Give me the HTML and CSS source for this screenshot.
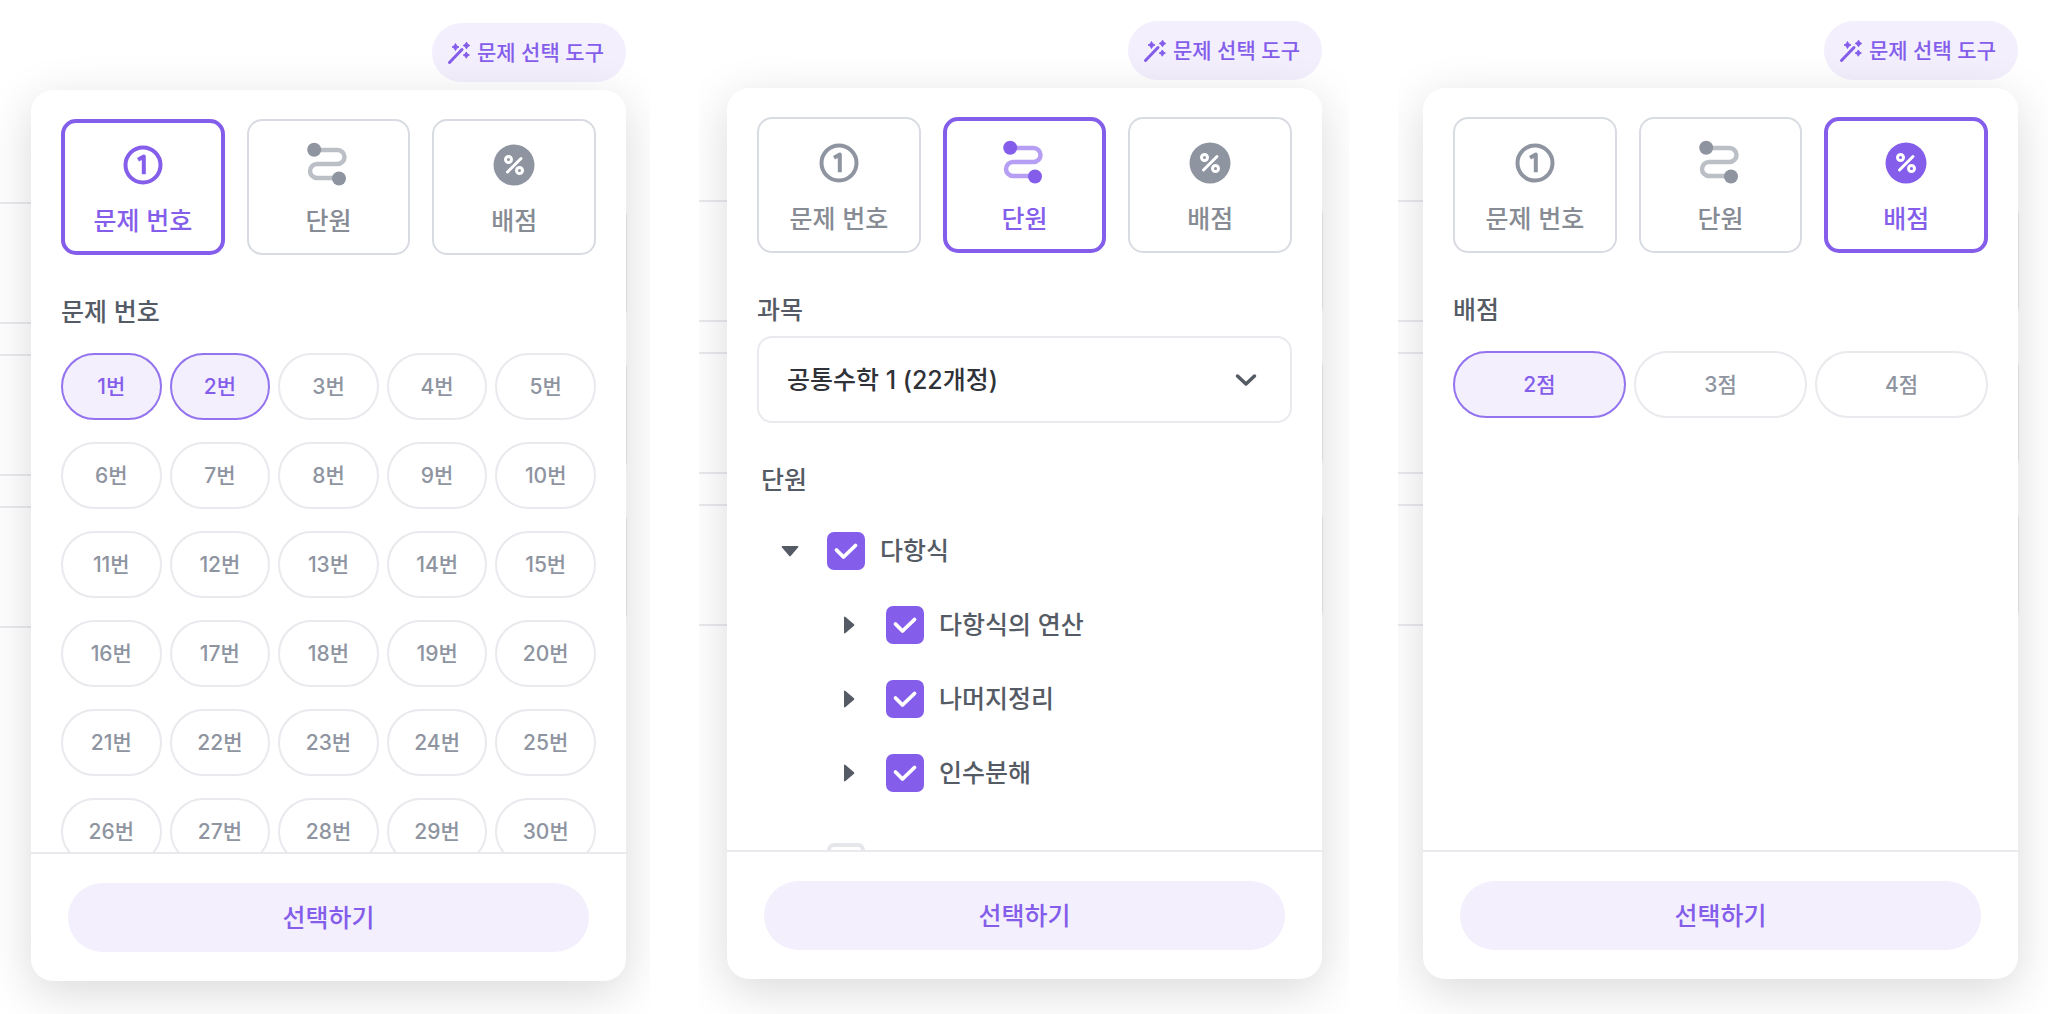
FILE: index.html
```
<!DOCTYPE html>
<html lang="ko">
<head>
  <meta charset="utf-8">
  <title>문제 선택 도구</title>
  <link rel="stylesheet" href="styles.css">
</head>
<body>
  <!-- icons shared by the three panels -->
  <svg class="icon-defs" aria-hidden="true">
    <symbol id="icon-wand" viewBox="0 0 24 24">
      <path d="M2.500 21.500 15 8.500" fill="none" stroke="currentColor" stroke-width="3" stroke-linecap="round"/>
      <g fill="currentColor" stroke="currentColor" stroke-width="1" stroke-linejoin="round">
        <path d="M8.500 2.500 9.700 4.800 12 6 9.700 7.200 8.500 9.500 7.300 7.200 5 6 7.300 4.800Z"/>
        <path d="M19.500 1.200 20.700 3.300 22.800 4.500 20.700 5.700 19.500 7.800 18.300 5.700 16.200 4.500 18.300 3.300Z"/>
        <path d="M19.300 11 20.400 13 22.400 14.100 20.400 15.200 19.300 17.200 18.200 15.200 16.200 14.100 18.200 13Z"/>
      </g>
    </symbol>
    <symbol id="icon-number" viewBox="0 0 48 48">
      <circle cx="24" cy="24" r="17.500" fill="none" stroke="currentColor" stroke-width="4"/>
      <path d="M19 18.800 24.800 15.500V33.300" fill="none" stroke="currentColor" stroke-width="4" stroke-linejoin="round"/>
    </symbol>
    <symbol id="icon-route" viewBox="0 0 48 48">
      <path d="M10 9H33.500a7 7 0 0 1 0 14H13a7 7 0 0 0 0 14H35" fill="none" stroke="currentColor" stroke-opacity=".6" stroke-width="4.500"/>
      <circle cx="10.200" cy="8.800" r="7" fill="currentColor"/>
      <circle cx="35" cy="37.500" r="7" fill="currentColor"/>
    </symbol>
    <symbol id="icon-percent" viewBox="0 0 48 48">
      <circle cx="24" cy="24" r="20.500" fill="currentColor"/>
      <g fill="none" stroke="#fff" stroke-width="3" stroke-linecap="round">
        <path d="M17.500 31 31 17.500"/>
        <circle cx="18.500" cy="18.500" r="3"/>
        <circle cx="29.500" cy="29.500" r="3"/>
      </g>
    </symbol>
    <symbol id="icon-check" viewBox="0 0 38 38">
      <path d="M9.500 18 16.500 25 28.500 13.500" fill="none" stroke="currentColor" stroke-width="3.800" stroke-linecap="round" stroke-linejoin="round"/>
    </symbol>
    <symbol id="icon-caret" viewBox="0 0 24 24">
      <path d="M7 4.500Q7 2.800 8.500 4L17 11.300Q17.700 12 17 12.700L8.500 20Q7 21.200 7 19.500Z" fill="currentColor"/>
    </symbol>
  </svg>

  <main class="board">

    <!-- by question number -->
    <section class="shot shot-first">
      <div class="tool">
        <div class="sheets"><div></div><div></div><div></div></div>
        <button class="tool-toggle" type="button"><svg class="wand"><use href="#icon-wand"/></svg>문제 선택 도구</button>
        <div class="panel">
          <div class="panel-body">
            <div class="tabs">
              <button class="tab active" type="button"><svg><use href="#icon-number"/></svg>문제 번호</button>
              <button class="tab" type="button"><svg><use href="#icon-route"/></svg>단원</button>
              <button class="tab" type="button"><svg><use href="#icon-percent"/></svg>배점</button>
            </div>
            <h2 class="heading">문제 번호</h2>
            <div class="chips">
              <button class="chip active" type="button">1번</button>
              <button class="chip active" type="button">2번</button>
              <button class="chip" type="button">3번</button>
              <button class="chip" type="button">4번</button>
              <button class="chip" type="button">5번</button>
              <button class="chip" type="button">6번</button>
              <button class="chip" type="button">7번</button>
              <button class="chip" type="button">8번</button>
              <button class="chip" type="button">9번</button>
              <button class="chip" type="button">10번</button>
              <button class="chip" type="button">11번</button>
              <button class="chip" type="button">12번</button>
              <button class="chip" type="button">13번</button>
              <button class="chip" type="button">14번</button>
              <button class="chip" type="button">15번</button>
              <button class="chip" type="button">16번</button>
              <button class="chip" type="button">17번</button>
              <button class="chip" type="button">18번</button>
              <button class="chip" type="button">19번</button>
              <button class="chip" type="button">20번</button>
              <button class="chip" type="button">21번</button>
              <button class="chip" type="button">22번</button>
              <button class="chip" type="button">23번</button>
              <button class="chip" type="button">24번</button>
              <button class="chip" type="button">25번</button>
              <button class="chip" type="button">26번</button>
              <button class="chip" type="button">27번</button>
              <button class="chip" type="button">28번</button>
              <button class="chip" type="button">29번</button>
              <button class="chip" type="button">30번</button>
            </div>
          </div>
          <div class="panel-footer">
            <button class="submit" type="button">선택하기</button>
          </div>
        </div>
      </div>
    </section>

    <!-- by unit -->
    <section class="shot">
      <div class="tool">
        <div class="sheets"><div></div><div></div><div></div></div>
        <button class="tool-toggle" type="button"><svg class="wand"><use href="#icon-wand"/></svg>문제 선택 도구</button>
        <div class="panel">
          <div class="panel-body">
            <div class="tabs">
              <button class="tab" type="button"><svg><use href="#icon-number"/></svg>문제 번호</button>
              <button class="tab active" type="button"><svg><use href="#icon-route"/></svg>단원</button>
              <button class="tab" type="button"><svg><use href="#icon-percent"/></svg>배점</button>
            </div>
            <label class="heading heading-select" for="subject">과목</label>
            <div class="select-box">
              <select id="subject">
                <option>공통수학 1 (22개정)</option>
              </select>
              <svg class="chevron" viewBox="0 0 24 24"><path d="M3.500 8 12 16 20.500 8" fill="none" stroke="currentColor" stroke-width="3.500" stroke-linecap="round" stroke-linejoin="round"/></svg>
            </div>
            <h2 class="heading heading-tree">단원</h2>
            <ul class="tree">
              <li>
                <div class="node">
                  <button class="caret open" type="button" aria-label="접기"><svg><use href="#icon-caret"/></svg></button>
                  <label><span class="check"><input type="checkbox" checked><svg><use href="#icon-check"/></svg></span>다항식</label>
                </div>
                <ul>
                  <li class="node">
                    <button class="caret" type="button" aria-label="펼치기"><svg><use href="#icon-caret"/></svg></button>
                    <label><span class="check"><input type="checkbox" checked><svg><use href="#icon-check"/></svg></span>다항식의 연산</label>
                  </li>
                  <li class="node">
                    <button class="caret" type="button" aria-label="펼치기"><svg><use href="#icon-caret"/></svg></button>
                    <label><span class="check"><input type="checkbox" checked><svg><use href="#icon-check"/></svg></span>나머지정리</label>
                  </li>
                  <li class="node">
                    <button class="caret" type="button" aria-label="펼치기"><svg><use href="#icon-caret"/></svg></button>
                    <label><span class="check"><input type="checkbox" checked><svg><use href="#icon-check"/></svg></span>인수분해</label>
                  </li>
                </ul>
              </li>
              <li>
                <div class="node">
                  <button class="caret" type="button" aria-label="펼치기"><svg><use href="#icon-caret"/></svg></button>
                  <label><span class="check"><input type="checkbox"></span></label>
                </div>
              </li>
            </ul>
          </div>
          <div class="panel-footer">
            <button class="submit" type="button">선택하기</button>
          </div>
        </div>
      </div>
    </section>

    <!-- by points -->
    <section class="shot shot-last">
      <div class="tool">
        <div class="sheets"><div></div><div></div><div></div></div>
        <button class="tool-toggle" type="button"><svg class="wand"><use href="#icon-wand"/></svg>문제 선택 도구</button>
        <div class="panel">
          <div class="panel-body">
            <div class="tabs">
              <button class="tab" type="button"><svg><use href="#icon-number"/></svg>문제 번호</button>
              <button class="tab" type="button"><svg><use href="#icon-route"/></svg>단원</button>
              <button class="tab active" type="button"><svg><use href="#icon-percent"/></svg>배점</button>
            </div>
            <h2 class="heading">배점</h2>
            <div class="chips chips-points">
              <button class="chip active" type="button">2점</button>
              <button class="chip" type="button">3점</button>
              <button class="chip" type="button">4점</button>
            </div>
          </div>
          <div class="panel-footer">
            <button class="submit" type="button">선택하기</button>
          </div>
        </div>
      </div>
    </section>

  </main>
</body>
</html>
```
FILE: styles.css
```
* {
  box-sizing: border-box;
}

body {
  margin: 0;
  background-color: #fff;
  color: #555b65;
  font-family: Inter, "Noto Sans CJK KR", sans-serif;
  font-size: 25px;
  font-weight: 500;
  line-height: 36px;
}

button,
select,
input {
  margin: 0;
  font: inherit;
}

button {
  padding: 0;
  border: none;
  background: none;
  color: inherit;
  cursor: pointer;
}

svg {
  display: block;
}

.icon-defs {
  position: absolute;
  width: 0;
  height: 0;
}

.board {
  display: grid;
  grid-template-columns: repeat(3, 1fr);
  gap: 49px;
  height: 100vh;
}

.shot {
  padding: 21px 27px 0 28px;
  overflow: hidden;
}

.shot-first {
  padding: 23px 24px 0 31px;
}

.shot-last {
  padding: 21px 30px 0 25px;
}

.tool {
  position: relative;
  display: flex;
  flex-direction: column;
  align-items: flex-end;
  gap: 8px;
}

/* question cards lying behind the panel */
.sheets {
  position: absolute;
  top: 179px;
  left: -60px;
  right: -1px;
  display: flex;
  flex-direction: column;
  gap: 30px;
}

.sheets div {
  height: 122px;
  border: 2px solid #e9e9ee;
  border-radius: 16px;
}

.tool-toggle {
  display: flex;
  align-items: center;
  gap: 6px;
  height: 59px;
  padding: 0 22px 0 15px;
  border-radius: 30px;
  background-color: #f3effd;
  color: #845eeb;
  font-size: 21px;
}

.wand {
  width: 24px;
  height: 24px;
}

.panel {
  position: relative;
  display: flex;
  flex-direction: column;
  width: 100%;
  height: calc(100vh - 123px);
  border-radius: 22px;
  background-color: #fff;
  box-shadow: 0 12px 48px rgba(0, 0, 0, .15);
}

.panel-body {
  flex: 1;
  min-height: 0;
  padding: 29px 30px 0;
  overflow: hidden;
}

.panel-footer {
  padding: 29px 37px;
  border-top: 2px solid #e9e9ee;
}

.submit {
  width: 100%;
  height: 69px;
  border-radius: 35px;
  background-color: #f3effd;
  color: #845eeb;
}

/* tabs */
.tabs {
  display: grid;
  grid-template-columns: repeat(3, 1fr);
  gap: 22px;
}

.tab {
  display: flex;
  flex-direction: column;
  align-items: center;
  justify-content: center;
  gap: 14px;
  height: 136px;
  padding-top: 5px;
  border: 2px solid #d8dbe2;
  border-radius: 15px;
  color: #868b94;
}

.tab svg {
  width: 48px;
  height: 48px;
  color: #8e94a0;
}

.tab.active {
  border: 4px solid #845eeb;
  color: #845eeb;
}

.tab.active svg {
  color: #845eeb;
}

.heading {
  display: block;
  margin: 39px 0 23px;
  font-size: 25px;
  font-weight: 500;
}

/* chips */
.chips {
  display: grid;
  grid-template-columns: repeat(5, 1fr);
  gap: 22px 8px;
}

.chips-points {
  grid-template-columns: repeat(3, 1fr);
}

.chip {
  height: 67px;
  border: 2px solid #e9e9ee;
  border-radius: 34px;
  color: #8e94a0;
  font-size: 21px;
}

.chip.active {
  border-color: #9473ee;
  background-color: #f3effd;
  color: #845eeb;
}

/* subject and units */
.heading-select {
  margin-bottom: 8px;
}

.select-box {
  display: grid;
  align-items: center;
}

.select-box select {
  grid-area: 1 / 1;
  width: 100%;
  height: 87px;
  padding: 0 28px;
  border: 2px solid #e9e9ee;
  border-radius: 15px;
  background-color: #fff;
  color: #2f3238;
  appearance: none;
}

.chevron {
  grid-area: 1 / 1;
  justify-self: end;
  width: 24px;
  height: 24px;
  margin-right: 34px;
  pointer-events: none;
}

.heading-tree {
  margin: 39px 0 16px;
  padding-left: 4px;
}

.tree,
.tree ul {
  margin: 0;
  padding: 0;
  list-style: none;
}

.tree {
  padding-left: 21px;
}

.tree > li {
  margin-bottom: 15px;
}

.tree ul {
  padding-left: 59px;
}

.node {
  display: flex;
  align-items: center;
  gap: 25px;
  height: 74px;
}

.node label {
  display: flex;
  align-items: center;
  gap: 15px;
}

.caret svg {
  width: 24px;
  height: 24px;
}

.caret.open svg {
  transform: rotate(90deg);
}

.check {
  display: grid;
}

.check input {
  grid-area: 1 / 1;
  width: 38px;
  height: 38px;
  border: 4px solid #e6e7eb;
  border-radius: 7px;
  background-color: #fff;
  appearance: none;
}

.check input:checked {
  border-color: #845eeb;
  background-color: #845eeb;
}

.check svg {
  grid-area: 1 / 1;
  width: 38px;
  height: 38px;
  color: #fff;
  pointer-events: none;
}
```
